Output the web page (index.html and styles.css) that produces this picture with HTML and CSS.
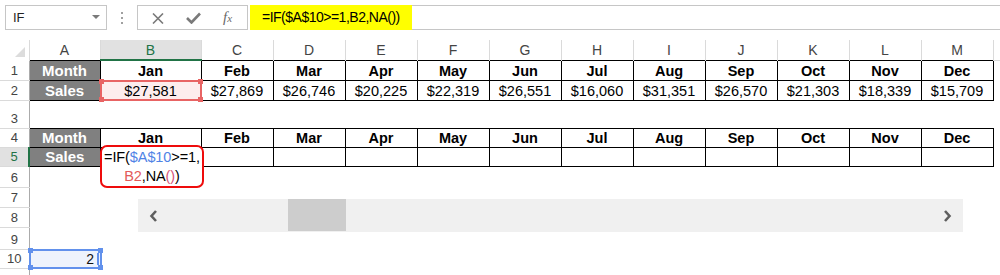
FILE: index.html
```html
<!DOCTYPE html>
<html lang="en">
<head>
    <meta charset="UTF-8">
    <title>Sheet</title>
    <link rel="stylesheet" href="styles.css">
</head>
<body>

<div class="topbar">
    <div class="namebox"><span class="name">IF</span><span class="caret"></span></div>
    <div class="grip"><i></i><i></i><i></i></div>
    <div class="fbtns">
        <span class="fbtn fb-x">
            <svg width="12" height="11" viewBox="0 0 12 11"><path d="M1 0.5 L11 10.5 M11 0.5 L1 10.5" stroke="#7a7a7a" stroke-width="1.6" fill="none"/></svg>
        </span>
        <span class="fbtn fb-ok">
            <svg width="15" height="12" viewBox="0 0 15 12"><path d="M1 6 L5.5 10.5 L14 1.5" stroke="#7a7a7a" stroke-width="2.6" fill="none"/></svg>
        </span>
        <span class="fbtn fb-fx"><span class="fx">f<small>x</small></span></span>
    </div>
    <div class="fbar"><span class="fcell">=IF($A$10&gt;=1,B2,NA())</span></div>
</div>

<div class="sheet-wrap">
    <table class="sheet">
        <colgroup>
            <col class="c-rh"><col class="c-a"><col class="c-b">
            <col class="c-n"><col class="c-n"><col class="c-n"><col class="c-n">
            <col class="c-n"><col class="c-n"><col class="c-n"><col class="c-n">
            <col class="c-n"><col class="c-n"><col class="c-n"><col class="c-rest">
        </colgroup>
        <tr class="r-hd">
            <th class="corner"><span class="tri"></span></th>
            <th>A</th><th class="col-sel">B</th><th>C</th><th>D</th><th>E</th><th>F</th>
            <th>G</th><th>H</th><th>I</th><th>J</th><th>K</th><th>L</th><th>M</th><th class="rest"></th>
        </tr>
        <tr class="r20">
            <td class="rh">1</td><td class="lbl">Month</td>
            <td class="t mon">Jan</td><td class="t mon">Feb</td><td class="t mon">Mar</td><td class="t mon">Apr</td>
            <td class="t mon">May</td><td class="t mon">Jun</td><td class="t mon">Jul</td><td class="t mon">Aug</td>
            <td class="t mon">Sep</td><td class="t mon">Oct</td><td class="t mon">Nov</td><td class="t mon">Dec</td><td></td>
        </tr>
        <tr class="r20">
            <td class="rh">2</td><td class="lbl">Sales</td>
            <td class="t val picked">$27,581</td><td class="t val">$27,869</td><td class="t val">$26,746</td><td class="t val">$20,225</td>
            <td class="t val">$22,319</td><td class="t val">$26,551</td><td class="t val">$16,060</td><td class="t val">$31,351</td>
            <td class="t val">$26,570</td><td class="t val">$21,303</td><td class="t val">$18,339</td><td class="t val">$15,709</td><td></td>
        </tr>
        <tr class="r28">
            <td class="rh">3</td><td></td><td></td><td></td><td></td><td></td><td></td><td></td><td></td><td></td><td></td><td></td><td></td><td></td><td></td>
        </tr>
        <tr class="r19">
            <td class="rh">4</td><td class="lbl">Month</td>
            <td class="t mon">Jan</td><td class="t mon">Feb</td><td class="t mon">Mar</td><td class="t mon">Apr</td>
            <td class="t mon">May</td><td class="t mon">Jun</td><td class="t mon">Jul</td><td class="t mon">Aug</td>
            <td class="t mon">Sep</td><td class="t mon">Oct</td><td class="t mon">Nov</td><td class="t mon">Dec</td><td></td>
        </tr>
        <tr class="r19">
            <td class="rh row-sel">5</td><td class="lbl">Sales</td>
            <td class="t"></td><td class="t"></td><td class="t"></td><td class="t"></td>
            <td class="t"></td><td class="t"></td><td class="t"></td><td class="t"></td>
            <td class="t"></td><td class="t"></td><td class="t"></td><td class="t"></td><td></td>
        </tr>
        <tr class="r21">
            <td class="rh">6</td><td></td><td></td><td></td><td></td><td></td><td></td><td></td><td></td><td></td><td></td><td></td><td></td><td></td><td></td>
        </tr>
        <tr class="r20">
            <td class="rh">7</td><td></td><td></td><td></td><td></td><td></td><td></td><td></td><td></td><td></td><td></td><td></td><td></td><td></td><td></td>
        </tr>
        <tr class="r20">
            <td class="rh">8</td><td></td><td></td><td></td><td></td><td></td><td></td><td></td><td></td><td></td><td></td><td></td><td></td><td></td><td></td>
        </tr>
        <tr class="r22">
            <td class="rh">9</td><td></td><td></td><td></td><td></td><td></td><td></td><td></td><td></td><td></td><td></td><td></td><td></td><td></td><td></td>
        </tr>
        <tr class="r19">
            <td class="rh">10</td><td class="num active">2</td><td></td><td></td><td></td><td></td><td></td><td></td><td></td><td></td><td></td><td></td><td></td><td></td><td></td>
        </tr>
        <tr class="r-end">
            <td class="rh"></td><td></td><td></td><td></td><td></td><td></td><td></td><td></td><td></td><td></td><td></td><td></td><td></td><td></td><td></td>
        </tr>
    </table>

    <!-- selection frames and the in-cell editor sit over the grid -->
    <div class="sel sel-ref"><i class="h tl"></i><i class="h tr"></i><i class="h bl"></i><i class="h br"></i></div>

    <div class="editor">
        =IF(<span class="ref-a">$A$10</span>&gt;=1,<br>
        <span class="ref-b">B2</span>,NA<span class="par">()</span>)
    </div>

    <div class="sel sel-act"><i class="h tl"></i><i class="h tr"></i><i class="h bl"></i><i class="h br"></i><i class="bar"></i></div>

    <div class="hscroll">
        <span class="arrow">
            <svg width="9" height="12" viewBox="0 0 9 12"><path d="M7 1 L2.5 6 L7 11" stroke="#5f5f5f" stroke-width="2.6" fill="none"/></svg>
        </span>
        <span class="thumb"></span>
        <span class="arrow arrow-r">
            <svg width="9" height="12" viewBox="0 0 9 12"><path d="M2 1 L6.5 6 L2 11" stroke="#5f5f5f" stroke-width="2.6" fill="none"/></svg>
        </span>
    </div>
</div>

</body>
</html>
```

FILE: styles.css
```css
*{
    margin: 0;
    padding: 0;
    box-sizing: border-box;
}
body{
    width: 1000px;
    height: 275px;
    overflow: hidden;
    background-color: #fff;
    font-family: "Liberation Sans", Arial, sans-serif;
}

/* formula bar */
.topbar{
    display: flex;
    height: 25px;
    margin-top: 5px;
    margin-bottom: 10px;
}
.namebox{
    width: 102px;
    margin-left: 5px;
    border: 1px solid #c6c6c6;
    display: flex;
    align-items: center;
    justify-content: space-between;
    padding: 0 6px 0 7px;
}
.name{
    font-size: 13px;
    color: #222;
}
.caret{
    width: 0;
    height: 0;
    border-left: 4px solid transparent;
    border-right: 4px solid transparent;
    border-top: 4px solid #7a7a7a;
    margin-top: -2px;
}
.grip{
    width: 30px;
    display: flex;
    flex-direction: column;
    align-items: center;
    justify-content: center;
    gap: 3px;
}
.grip i{
    width: 2px;
    height: 2px;
    background-color: #a0a0a0;
}
.fbtns{
    width: 111px;
    border: 1px solid #c6c6c6;
    display: flex;
}
.fbtn{
    display: flex;
    align-items: center;
    justify-content: center;
}
.fb-x{ width: 40px; padding-top: 1px; }
.fb-ok{ width: 30px; padding-top: 1px; }
.fb-fx{ width: 39px; }
.fx{
    font-family: "Liberation Serif", "Times New Roman", serif;
    font-style: italic;
    font-size: 15px;
    color: #6a6a6a;
}
.fx small{
    font-size: 11px;
}
.fbar{
    flex: 1;
    margin-left: 2px;
    border-top: 1px solid #c6c6c6;
    border-bottom: 1px solid #c6c6c6;
    display: flex;
}
.fcell{
    background-color: #ffff00;
    margin: -1px 0;
    padding: 0 12px;
    font-size: 14px;
    letter-spacing: -0.5px;
    line-height: 25px;
    color: #000;
}

/* grid */
.sheet-wrap{
    position: relative;
}
.sheet{
    width: 1000px;
    table-layout: fixed;
    border-collapse: collapse;
}
.c-rh{ width: 29px; }
.c-a{ width: 71px; }
.c-b{ width: 101px; }
.c-n{ width: 72px; }
.c-rest{ width: 7px; }

.sheet th, .sheet td{
    padding: 0;
    white-space: nowrap;
    overflow: hidden;
    text-align: center;
    vertical-align: bottom;
    line-height: 18px;
}
.r-hd{ height: 20px; }
.r20{ height: 20px; }
.r19{ height: 19px; }
.r21{ height: 21px; }
.r22{ height: 22px; }
.r28{ height: 28px; }
.r-end{ height: 7px; }

.sheet th{
    font-weight: normal;
    font-size: 14px;
    color: #444;
    border-right: 1px solid #dadada;
    vertical-align: middle;
}
.sheet th.rest{
    border-right: none;
    border-bottom: 1px solid #dadada;
}
.corner{
    position: relative;
}
.tri{
    position: absolute;
    right: 4px;
    bottom: 3px;
    width: 0;
    height: 0;
    border-left: 10px solid transparent;
    border-bottom: 10px solid #dcdcdc;
}
.sheet th.col-sel{
    background-color: #e1e1e1;
    color: #217346;
    border-bottom: 2px solid #217346;
}
.rh{
    font-size: 13px;
    color: #444;
    border-right: 1px solid #ababab;
    border-bottom: 1px solid #dadada;
}
.rh.row-sel{
    background-color: #e1e1e1;
    color: #217346;
    border-right: 2px solid #217346;
}

.sheet td.lbl{
    background-color: #808080;
    color: #fff;
    font-weight: bold;
    font-size: 15px;
    border: 1px solid #000;
}
.sheet td.t{
    border: 1px solid #000;
    font-size: 14.5px;
    color: #000;
}
.mon{
    font-weight: bold;
}
.picked{
    background-color: #fdeded;
}
.num{
    text-align: right !important;
    padding-right: 6px !important;
    font-size: 14px;
    color: #111;
}
.active{
    background-color: #eef3fc;
}

/* selection frames */
.sel{
    position: absolute;
    border: 2px solid;
}
.sel .h{
    position: absolute;
    width: 5px;
    height: 5px;
}
.sel .tl{ left: -3px; top: -3px; }
.sel .tr{ right: -3px; top: -3px; }
.sel .bl{ left: -3px; bottom: -3px; }
.sel .br{ right: -3px; bottom: -3px; }
.sel-ref{
    left: 100px;
    top: 40px;
    width: 102px;
    height: 21px;
    border-color: #e86464;
}
.sel-ref .h{
    background-color: #e86464;
}
.sel-act{
    left: 29px;
    top: 209px;
    width: 73px;
    height: 20px;
    border-color: #6291ec;
}
.sel-act .h{
    background-color: #6291ec;
}
.sel-act .bar{
    position: absolute;
    right: 1px;
    top: 2px;
    width: 2px;
    height: 12px;
    background-color: #6291ec;
}

/* cell being edited */
.editor{
    position: absolute;
    left: 100px;
    top: 105px;
    width: 104px;
    height: 43px;
    border: 2.5px solid #ee0c0c;
    border-radius: 7px;
    background-color: #fff;
    font-size: 14.5px;
    line-height: 19px;
    text-align: center;
    white-space: nowrap;
    color: #000;
    padding-top: 1px;
    letter-spacing: -0.1px;
}
.ref-a{ color: #4f83e6; }
.ref-b{ color: #e35a5a; }
.par{ color: #d6557a; }

/* horizontal scroll bar */
.hscroll{
    position: absolute;
    left: 138px;
    top: 159px;
    width: 825px;
    height: 33px;
    background-color: #f0f0f0;
    display: flex;
    align-items: center;
}
.arrow{
    width: 28px;
    display: flex;
    justify-content: center;
    padding-left: 2px;
}
.thumb{
    margin-left: 122px;
    width: 58px;
    height: 32px;
    background-color: #cdcdcd;
    align-self: flex-start;
}
.arrow-r{
    margin-left: auto;
    padding-left: 0;
    padding-right: 4px;
}
```
